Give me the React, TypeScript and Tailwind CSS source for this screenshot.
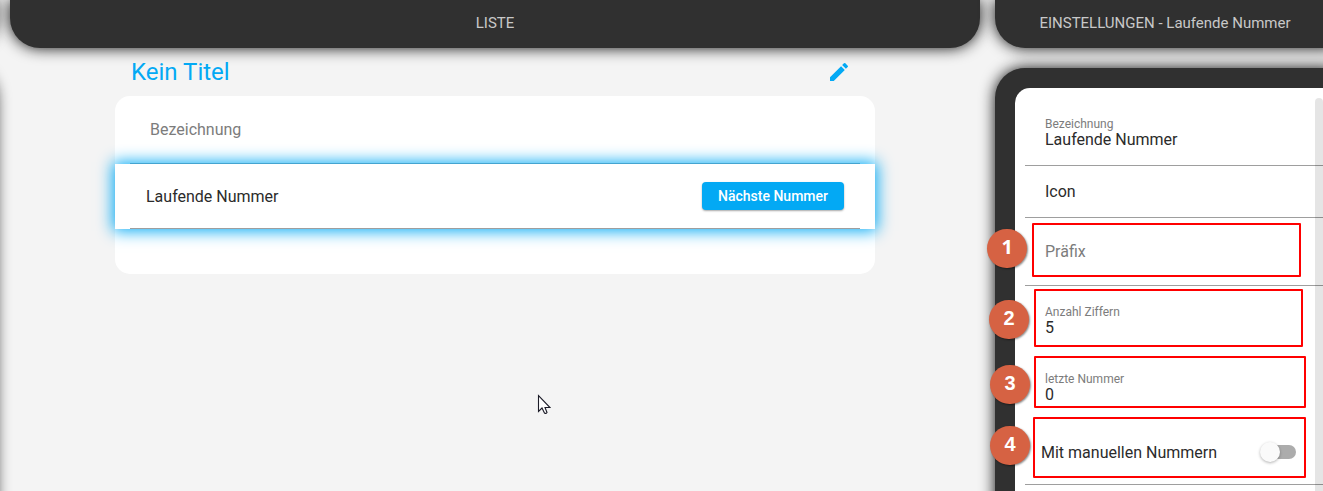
import React from "react";
import { MdEdit } from "react-icons/md";

const panel = "bg-[#303030] shadow-[0_0_15px_rgba(0,0,0,0.95)]";

function Field({ label, value }: { label: string; value: string }) {
  return (
    <div className="flex flex-col pl-5">
      <span className="text-xs leading-[14px] text-[#7c7c7c]">{label}</span>
      <span className="text-base leading-[18px] text-[#2b2b2b]">{value}</span>
    </div>
  );
}

function Marker({ n, circle, box }: { n: string; circle: string; box: string }) {
  return (
    <>
      <div className={`absolute rounded-[1px] border-2 border-[#ff0000] ${box}`} />
      <div
        className={`absolute flex h-[39.5px] w-[39.5px] items-center justify-center rounded-full bg-[#d66243] pb-[3px] text-[20px] leading-none font-bold text-white shadow-[1px_1px_2px_rgba(0,0,0,0.45)] ${circle} ${
          n === "1" ? "font-['Open_Sans',sans-serif]" : "font-['Liberation_Sans',sans-serif]"
        }`}
      >
        {n}
      </div>
    </>
  );
}

export default function App() {
  return (
    <div className="relative h-[491px] w-[1323px] overflow-hidden bg-[#f4f4f4] font-[Roboto,sans-serif]">
      <div className="-ml-[105px] flex h-full w-[1440px] gap-[15px]">
        <aside className="flex w-[100px] shrink-0 flex-col gap-5">
          <div className={`h-12 shrink-0 rounded-b-[30px] ${panel}`} />
          <div className={`-mb-10 flex-1 rounded-t-[30px] ${panel}`} />
        </aside>

        <main className="flex w-[970px] shrink-0 flex-col items-center">
          <header className={`flex h-12 w-full items-center justify-center rounded-b-[30px] pb-0.5 text-[15px] text-[#c8c8c8] ${panel}`}>
            <span>LISTE</span>
          </header>
          <div className="flex h-12 w-[760px] items-center justify-between pr-6 pl-4">
            <h1 className="text-2xl text-[#03a9f4]">Kein Titel</h1>
            <MdEdit size={24} className="text-[#03a9f4]" />
          </div>
          <section className="h-[178px] w-[760px] rounded-[15px] bg-white">
            <div className="mx-[15px] flex h-[68px] items-center border-b border-[#9e9e9e] pl-5 text-base text-[#7c7c7c]">Bezeichnung</div>
            <div className="relative h-[65px] bg-white px-[15px] shadow-[0_0_15px_2px_#03a9f4]">
              <div className="flex h-full items-center justify-between border-b border-[#9e9e9e] pr-4 pl-4">
                <span className="pt-px text-base text-[#2b2b2b]">Laufende Nummer</span>
                <button className="h-7 w-[142px] rounded-[4px] bg-[#03a9f4] text-sm font-medium text-white shadow-[0_1px_2px_rgba(0,0,0,0.35)]">Nächste Nummer</button>
              </div>
            </div>
          </section>
        </main>

        <aside className="flex w-[340px] shrink-0 flex-col gap-5">
          <header className={`flex h-12 shrink-0 items-center justify-center rounded-bl-[30px] pb-0.5 text-[15px] text-[#c8c8c8] ${panel}`}>
            <span>EINSTELLUNGEN - Laufende Nummer</span>
          </header>
          <div className={`-mb-10 flex-1 rounded-tl-[30px] p-5 pr-3 pb-0 ${panel}`}>
            <div className="relative h-full rounded-tl-[15px] bg-white pl-2.5">
              <div className="flex h-[78px] flex-col border-b border-[#9e9e9e] pt-[29px]">
                <Field label="Bezeichnung" value="Laufende Nummer" />
              </div>
              <div className="flex h-[52px] items-center border-b border-[#9e9e9e] pl-5 text-base text-[#2b2b2b]">Icon</div>
              <div className="flex h-[68px] items-center border-b border-[#9e9e9e] pl-5 text-base text-[#7c7c7c]">Präfix</div>
              <div className="h-[67px] pt-[19px]">
                <Field label="Anzahl Ziffern" value="5" />
              </div>
              <div className="h-[67px] pt-[19px]">
                <Field label="letzte Nummer" value="0" />
              </div>
              <div className="flex h-[65px] items-center justify-between border-b border-[#9e9e9e] pr-[27px] pl-4">
                <span className="pt-px text-base text-[#2b2b2b]">Mit manuellen Nummern</span>
                <div className="flex h-[14px] w-[34px] items-center rounded-full bg-[#acacac]">
                  <div className="-ml-0.5 h-5 w-5 rounded-full bg-[#fafafa] shadow-[0_1px_3px_rgba(0,0,0,0.3)]" />
                </div>
              </div>
              <div className="absolute top-2.5 right-0 bottom-0 w-2 rounded-t-[4px] bg-black/10" />
            </div>
          </div>
        </aside>
      </div>

      <Marker n="1" circle="left-[987.4px] top-[228.5px]" box="left-[1032px] top-[223px] h-[54px] w-[269px]" />
      <Marker n="2" circle="left-[989.4px] top-[299.5px]" box="left-[1034px] top-[289px] h-[58px] w-[269px]" />
      <Marker n="3" circle="left-[990.4px] top-[364.5px]" box="left-[1034px] top-[356px] h-[52px] w-[272px]" />
      <Marker n="4" circle="left-[990.4px] top-[425.5px]" box="left-[1033px] top-[417px] h-[61px] w-[273px]" />

      <svg className="absolute top-[394px] left-[537px]" width="14" height="21" viewBox="0 0 14 21">
        <path d="M1.5 1.5V17.5L5 14L7.5 19Q9 20 10 18.5L8 13.5H13Z" fill="white" stroke="#1c1c28" strokeWidth="1.1" />
      </svg>
    </div>
  );
}
